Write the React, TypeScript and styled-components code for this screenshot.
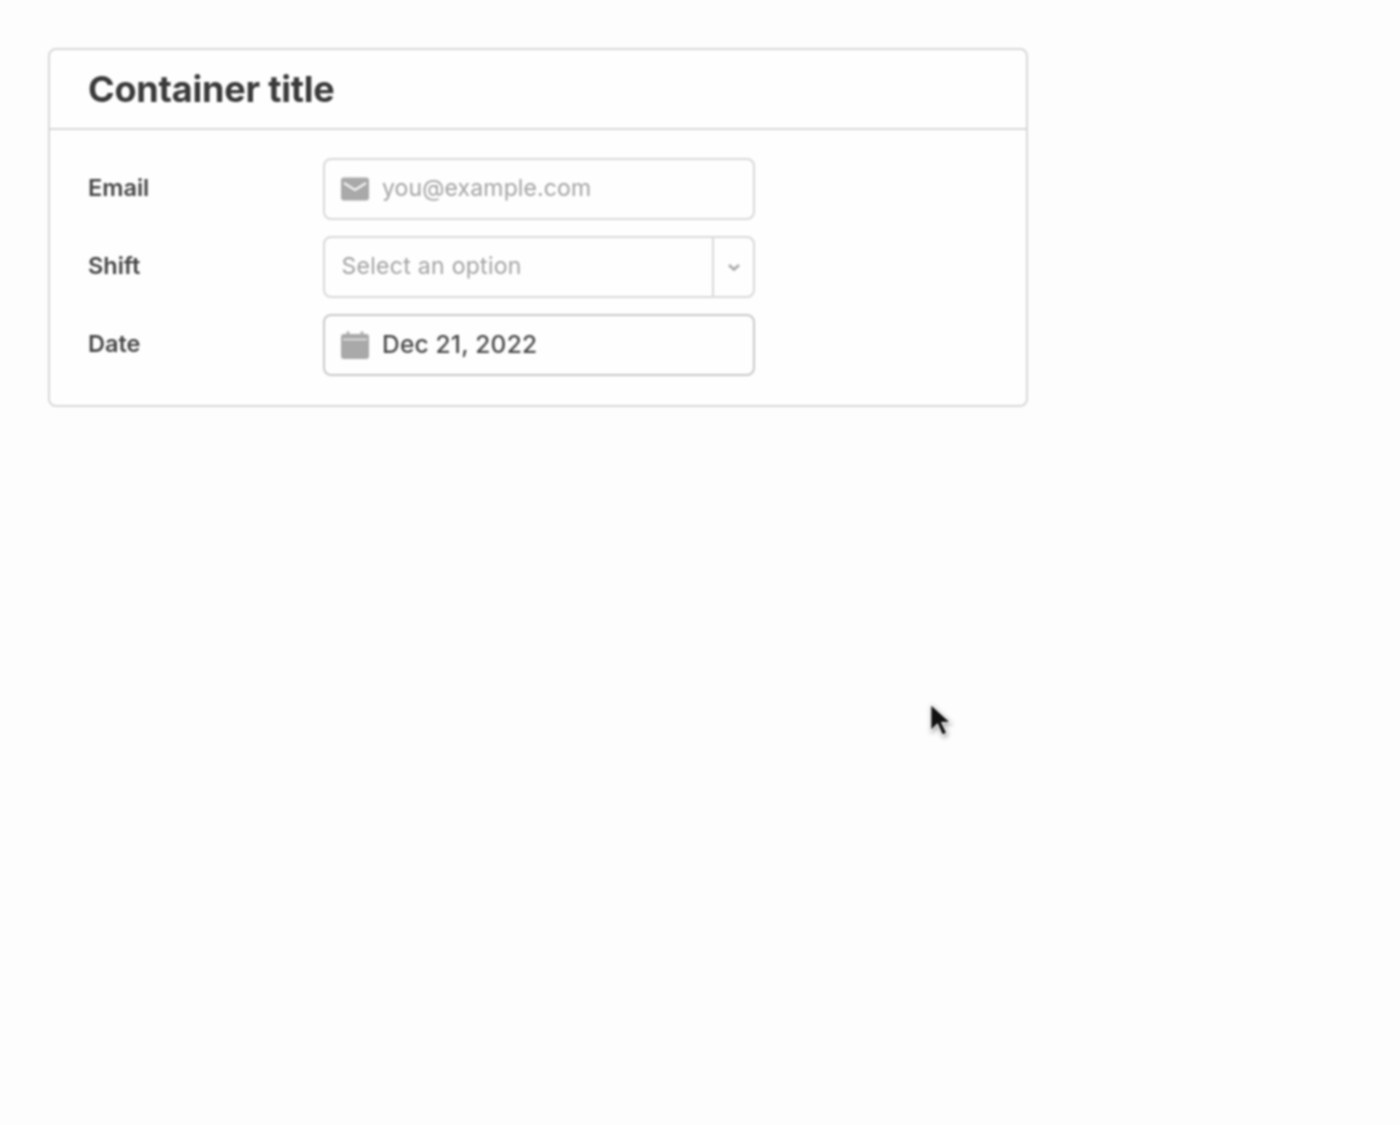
import React from "react";
import styled, { createGlobalStyle } from "styled-components";

const Global = createGlobalStyle`
  html, body { margin: 0; padding: 0; background: #fdfdfd; }
  body { font-family: Inter, "Liberation Sans", sans-serif; }
`;

const Page = styled.div`
  position: relative;
  box-sizing: border-box;
  width: 1400px;
  height: 1125px;
  padding: 48px;
  background: #fdfdfd;
  overflow: hidden;
  filter: blur(0.8px);
`;

const Card = styled.section`
  box-sizing: border-box;
  width: 980px;
  height: 359px;
  border: 2px solid #d8d8d8;
  border-radius: 8px;
  background: #fefefe;
`;

const Header = styled.header`
  box-sizing: border-box;
  height: 80px;
  padding: 0 38px;
  display: flex;
  align-items: center;
  border-bottom: 2px solid #d8d8d8;
`;

const Title = styled.h2`
  margin: 0;
  font-size: 36px;
  font-weight: 700;
  color: #3a3a3a;
  letter-spacing: -0.2px;
`;

const Form = styled.div`
  padding: 28px 38px 0;
  display: flex;
  flex-direction: column;
  gap: 16px;
`;

const Row = styled.div`
  display: grid;
  grid-template-columns: 235px 432px;
  align-items: center;
`;

const Label = styled.label`
  font-size: 23.5px;
  font-weight: 600;
  color: #454545;
  padding-bottom: 3px;
`;

const Field = styled.div<{ $strong?: boolean }>`
  box-sizing: border-box;
  height: 62px;
  display: flex;
  align-items: center;
  border: 2px solid ${(p) => (p.$strong ? "#c9c9c9" : "#d9d9d9")};
  border-radius: 8px;
  background: #fefefe;
`;

const Lead = styled.span`
  width: 57px;
  flex: none;
  display: flex;
  justify-content: center;
  padding-left: 2px;
  padding-bottom: 1px;
  box-sizing: border-box;
`;

const Value = styled.span<{ $tone: "email" | "select" | "date" }>`
  flex: 1;
  padding-bottom: 2px;
  font-size: ${(p) => (p.$tone === "date" ? "24.5px" : "23px")};
  font-weight: ${(p) => (p.$tone === "date" ? 500 : 400)};
  letter-spacing: ${(p) => (p.$tone === "email" ? "0.13px" : p.$tone === "select" ? "0.29px" : "0.2px")};
  padding-left: ${(p) => (p.$tone === "select" ? "16.5px" : "0")};
  color: ${(p) => (p.$tone === "date" ? "#4a4a4a" : "#a3a3a3")};
`;

const Caret = styled.span`
  width: 39px;
  height: 100%;
  flex: none;
  display: flex;
  align-items: center;
  justify-content: center;
  border-left: 2px solid #d9d9d9;
`;

const Pointer = styled.svg`
  position: absolute;
  left: 925px;
  top: 702px;
  filter: drop-shadow(1px 2px 2px rgba(0, 0, 0, 0.35));
`;

export default function App() {
  return (
    <Page>
      <Global />
      <Card>
        <Header>
          <Title>Container title</Title>
        </Header>
        <Form>
          <Row>
            <Label>Email</Label>
            <Field>
              <Lead>
                <svg width="28" height="24" viewBox="0 0 28 24">
                  <rect width="28" height="23" y="0.5" rx="3" fill="#a9a9a9" />
                  <path d="M3 6 14 13 25 6" fill="none" stroke="#f4f4f4" strokeWidth="2.2" />
                </svg>
              </Lead>
              <Value $tone="email">you@example.com</Value>
            </Field>
          </Row>
          <Row>
            <Label>Shift</Label>
            <Field>
              <Value $tone="select">Select an option</Value>
              <Caret>
                <svg width="14" height="9" viewBox="0 0 14 9">
                  <path d="M2 2l5 4.5L12 2" fill="none" stroke="#a8a8a8" strokeWidth="2.6" />
                </svg>
              </Caret>
            </Field>
          </Row>
          <Row>
            <Label>Date</Label>
            <Field $strong>
              <Lead>
                <svg width="28" height="28" viewBox="0 0 28 28">
                  <path d="M3 3h22a3 3 0 0 1 3 3v19a3 3 0 0 1-3 3H3a3 3 0 0 1-3-3V6a3 3 0 0 1 3-3z" fill="#a9a9a9" />
                  <path d="M2 8.5h24" stroke="#ececec" strokeWidth="1.4" />
                  <path d="M7 0.5v5M21 0.5v5" stroke="#a9a9a9" strokeWidth="2.6" />
                </svg>
              </Lead>
              <Value $tone="date">Dec 21, 2022</Value>
            </Field>
          </Row>
        </Form>
      </Card>
      <Pointer width="27" height="40" viewBox="0 0 24 36">
        <path d="M5 2v24l6-6 4.5 10 4-2-4.5-9.5h8z" fill="#111" stroke="#fff" strokeWidth="1" />
      </Pointer>
    </Page>
  );
}
